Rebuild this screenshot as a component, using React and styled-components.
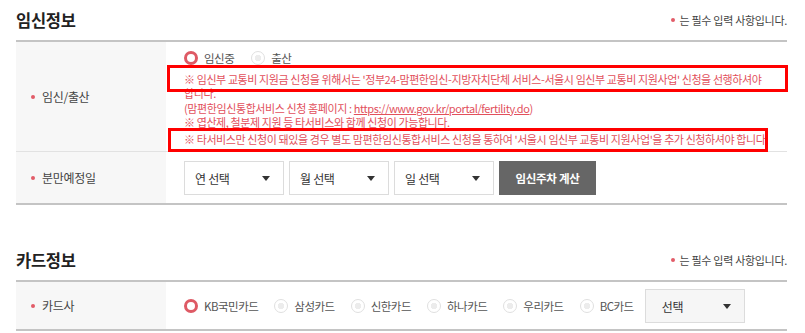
import React from "react";
import styled, { createGlobalStyle } from "styled-components";

const Global = createGlobalStyle`
  html, body { margin: 0; padding: 0; background: #fff; }
  body { font-family: "Noto Sans CJK KR", "Noto Sans", sans-serif; color: #333; }
  * { box-sizing: border-box; }
`;

const Page = styled.div`
  width: 805px;
  padding: 0 18px 0 16px;
`;

const Section = styled.section`
  margin-top: ${(p) => p.$mt || 0}px;
`;

const Header = styled.div`
  height: 40px;
  display: flex;
  align-items: center;
  justify-content: space-between;
`;

const Title = styled.h2`
  margin: 0;
  font-size: 16.5px;
  font-weight: 700;
  color: #222;
  letter-spacing: -0.3px;
`;

const Note = styled.span`
  font-size: 11px;
  color: #444;
  letter-spacing: -0.3px;
  display: flex;
  align-items: center;
  gap: 5px;
`;

const Dot = styled.span`
  width: 4px;
  height: 4px;
  border-radius: 50%;
  background: #e25c68;
  display: inline-block;
  flex: none;
`;

const Table = styled.div`
  border-top: 2px solid #c4c4c4;
  border-bottom: 2px solid #c4c4c4;
`;

const Row = styled.div`
  display: grid;
  grid-template-columns: 150px 1fr;
  & + & { border-top: 1px solid #e2e2e2; }
`;

const Label = styled.div`
  background: #f7f7f7;
  display: flex;
  align-items: center;
  gap: 7px;
  padding-left: 15px;
  font-size: 12px;
  color: #444;
  letter-spacing: -0.3px;
`;

const Cell = styled.div`
  position: relative;
  padding: ${(p) => p.$pad || "8px 0 8px 18px"};
  display: flex;
  flex-direction: ${(p) => (p.$col ? "column" : "row")};
  align-items: ${(p) => (p.$col ? "flex-start" : "center")};
  gap: ${(p) => p.$gap || 0}px;
`;

const RadioGroup = styled.div`
  display: flex;
  align-items: center;
  gap: ${(p) => p.$gap || 16}px;
  height: 14px;
`;

const RadioItem = styled.label`
  display: flex;
  align-items: center;
  gap: 6px;
  font-size: 11.5px;
  color: #555;
  letter-spacing: -0.5px;
`;

const RadioMark = styled.span`
  width: 14px;
  height: 14px;
  border-radius: 50%;
  flex: none;
  display: inline-block;
  ${(p) =>
    p.$on
      ? `border: 3.5px solid #de5a65; background: #fff;`
      : `border: 1px solid #e0e0e0; background: radial-gradient(circle, #ececec 0 3px, #fff 3.5px);`}
`;

const Notice = styled.div`
  margin-top: ${(p) => p.$mt || 0}px;
  font-size: 11px;
  line-height: 14.3px;
  color: #e2505c;
  letter-spacing: -0.4px;
  width: 600px;
  a { color: #e2505c; text-decoration: underline; }
`;

const Notices = styled.div`
  margin-top: 7px;
`;

const Highlight = styled.div`
  position: absolute;
  left: ${(p) => p.$l}px;
  top: ${(p) => p.$t}px;
  width: ${(p) => p.$w}px;
  height: ${(p) => p.$h}px;
  border: 3px solid #ff0000;
  pointer-events: none;
`;

const Select = styled.div`
  width: 100px;
  height: 34px;
  border: 1px solid #dcdcdc;
  background: ${(p) => (p.$gray ? "#f6f6f6" : "#fff")};
  display: flex;
  align-items: center;
  justify-content: space-between;
  padding: 0 13px 0 ${(p) => (p.$gray ? 16 : 10)}px;
  font-size: 12px;
  color: #333;
  letter-spacing: -0.3px;
`;

const Caret = styled.span`
  width: 0;
  height: 0;
  border-left: 4px solid transparent;
  border-right: 4px solid transparent;
  border-top: 5px solid #333;
`;

const Button = styled.button`
  width: 97px;
  height: 34px;
  border: none;
  background: #666;
  color: #fff;
  font-family: inherit;
  font-size: 11.5px;
  font-weight: 700;
  letter-spacing: -0.3px;
  padding: 0;
`;

const Spacer = styled.span`
  width: 11px;
  flex: none;
`;

const Radio = ({ on, children }) => (
  <RadioItem>
    <RadioMark $on={on} />
    {children}
  </RadioItem>
);

const Sel = ({ children, gray }) => (
  <Select $gray={gray}>
    {children}
    <Caret />
  </Select>
);

export default function App() {
  return (
    <Page>
      <Global />
      <Section>
        <Header>
          <Title>임신정보</Title>
          <Note><Dot />는 필수 입력 사항입니다.</Note>
        </Header>
        <Table>
          <Row>
            <Label><Dot />임신/출산</Label>
            <Cell $col $pad="9px 0 5px 18px">
              <RadioGroup $gap={17}>
                <Radio on>임신중</Radio>
                <Radio>출산</Radio>
              </RadioGroup>
              <Notices>
                <Notice>
                  ※ 임신부 교통비 지원금 신청을 위해서는 '정부24-맘편한임신-지방자치단체 서비스-서울시 임신부 교통비 지원사업' 신청을 선행하셔야
                  <br />
                  합니다.
                </Notice>
                <Notice>
                  (맘편한임신통합서비스 신청 홈페이지 : <a>https://www.gov.kr/portal/fertility.do</a>)
                </Notice>
                <Notice>※ 엽산제, 철분제 지원 등 타서비스와 함께 신청이 가능합니다.</Notice>
                <Notice $mt={3}>
                  ※ 타서비스만 신청이 돼있을 경우 별도 맘편한임신통합서비스 신청을 통하여 '서울시 임신부 교통비 지원사업'을 추가 신청하셔야 합니다.
                </Notice>
              </Notices>
              <Highlight $l={1} $t={23} $w={621} $h={27} />
              <Highlight $l={2} $t={86} $w={600} $h={24} />
            </Cell>
          </Row>
          <Row>
            <Label><Dot />분만예정일</Label>
            <Cell $gap={5} $pad="9px 0 8px 18px">
              <Sel>연 선택</Sel>
              <Sel>월 선택</Sel>
              <Sel>일 선택</Sel>
              <Button>임신주차 계산</Button>
            </Cell>
          </Row>
        </Table>
      </Section>
      <Section $mt={35}>
        <Header>
          <Title>카드정보</Title>
          <Note><Dot />는 필수 입력 사항입니다.</Note>
        </Header>
        <Table>
          <Row>
            <Label><Dot />카드사</Label>
            <Cell $pad="7px 0 6px 18px">
              <RadioGroup $gap={16}>
                <Radio on>KB국민카드</Radio>
                <Radio>삼성카드</Radio>
                <Radio>신한카드</Radio>
                <Radio>하나카드</Radio>
                <Radio>우리카드</Radio>
                <Radio>BC카드</Radio>
              </RadioGroup>
              <Spacer />
              <Sel gray>선택</Sel>
            </Cell>
          </Row>
        </Table>
      </Section>
    </Page>
  );
}
